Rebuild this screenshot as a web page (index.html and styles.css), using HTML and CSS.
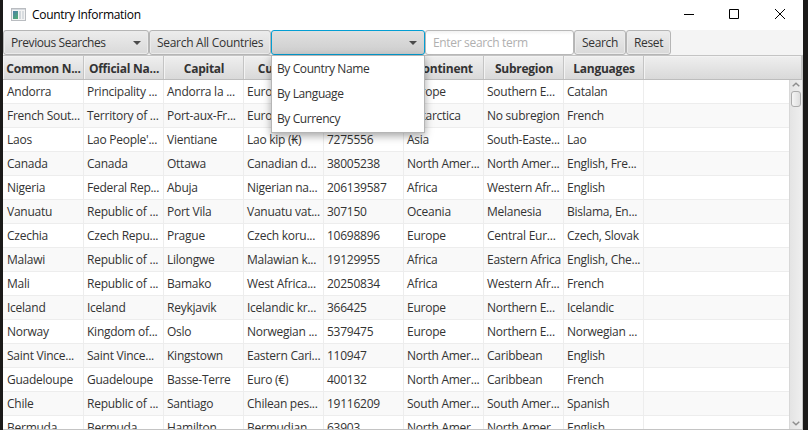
FILE: index.html
```html
<!DOCTYPE html>
<html lang="en">
<head>
<meta charset="utf-8">
<title>Country Information</title>
<link rel="stylesheet" href="styles.css">
</head>
<body>
<div class="window">
  <header class="titlebar">
    <svg class="app-icon" width="15" height="13" viewBox="0 0 15 13">
      <defs><linearGradient id="g" x1="0" y1="0" x2="0.6" y2="1"><stop offset="0" stop-color="#4d7fa8"/><stop offset="1" stop-color="#50a878"/></linearGradient></defs>
      <rect x=".5" y=".5" width="14" height="12" fill="#f4f4f4" stroke="#b9bcc0"/>
      <rect x="1" y="1" width="13" height="1" fill="#d5d9de"/>
      <rect x="2" y="3" width="5" height="8" fill="url(#g)"/>
      <rect x="8" y="3" width="2" height="8" fill="#d3d8dc"/><rect x="11" y="3" width="2" height="8" fill="#d9dde0"/>
    </svg>
    <span class="title">Country Information</span>
    <svg class="controls" width="103" height="12" viewBox="0 0 103 12" fill="none" stroke="#000">
      <path d="M0 6.500h10M45.500 1.500h9v9h-9zM91 1l10 10M101 1l-10 10"/>
    </svg>
  </header>
  <div class="toolbar">
    <div class="button previous"><span>Previous Searches</span><i class="arrow"></i></div>
    <div class="button all"><span>Search All Countries</span></div>
    <div class="button combo"><i class="arrow"></i>
      <div class="menu"><div>By Country Name</div><div>By Language</div><div>By Currency</div></div>
    </div>
    <div class="field">Enter search term</div>
    <div class="button search"><span>Search</span></div>
    <div class="button reset"><span>Reset</span></div>
  </div>
  <main class="table">
    <div class="head"><b>Common N...</b><b>Official Na...</b><b>Capital</b><b>Currency</b><b>Population</b><b>Continent</b><b>Subregion</b><b>Languages</b><b></b></div>
    <div class="body">
      <div class="rows">
        <div class="row"><span>Andorra</span><span>Principality ...</span><span>Andorra la ...</span><span>Euro (€)</span><span>77265</span><span>Europe</span><span>Southern E...</span><span>Catalan</span></div>
        <div class="row"><span>French Sout...</span><span>Territory of ...</span><span>Port-aux-Fr...</span><span>Euro (€)</span><span>400</span><span>Antarctica</span><span>No subregion</span><span>French</span></div>
        <div class="row"><span>Laos</span><span>Lao People'...</span><span>Vientiane</span><span>Lao kip (₭)</span><span>7275556</span><span>Asia</span><span>South-Easte...</span><span>Lao</span></div>
        <div class="row"><span>Canada</span><span>Canada</span><span>Ottawa</span><span>Canadian d...</span><span>38005238</span><span>North Amer...</span><span>North Amer...</span><span>English, Fre...</span></div>
        <div class="row"><span>Nigeria</span><span>Federal Rep...</span><span>Abuja</span><span>Nigerian na...</span><span>206139587</span><span>Africa</span><span>Western Afr...</span><span>English</span></div>
        <div class="row"><span>Vanuatu</span><span>Republic of ...</span><span>Port Vila</span><span>Vanuatu vat...</span><span>307150</span><span>Oceania</span><span>Melanesia</span><span>Bislama, En...</span></div>
        <div class="row"><span>Czechia</span><span>Czech Repu...</span><span>Prague</span><span>Czech koru...</span><span>10698896</span><span>Europe</span><span>Central Eur...</span><span>Czech, Slovak</span></div>
        <div class="row"><span>Malawi</span><span>Republic of ...</span><span>Lilongwe</span><span>Malawian k...</span><span>19129955</span><span>Africa</span><span>Eastern Africa</span><span>English, Che...</span></div>
        <div class="row"><span>Mali</span><span>Republic of ...</span><span>Bamako</span><span>West Africa...</span><span>20250834</span><span>Africa</span><span>Western Afr...</span><span>French</span></div>
        <div class="row"><span>Iceland</span><span>Iceland</span><span>Reykjavik</span><span>Icelandic kr...</span><span>366425</span><span>Europe</span><span>Northern E...</span><span>Icelandic</span></div>
        <div class="row"><span>Norway</span><span>Kingdom of...</span><span>Oslo</span><span>Norwegian ...</span><span>5379475</span><span>Europe</span><span>Northern E...</span><span>Norwegian ...</span></div>
        <div class="row"><span>Saint Vince...</span><span>Saint Vince...</span><span>Kingstown</span><span>Eastern Cari...</span><span>110947</span><span>North Amer...</span><span>Caribbean</span><span>English</span></div>
        <div class="row"><span>Guadeloupe</span><span>Guadeloupe</span><span>Basse-Terre</span><span>Euro (€)</span><span>400132</span><span>North Amer...</span><span>Caribbean</span><span>French</span></div>
        <div class="row"><span>Chile</span><span>Republic of ...</span><span>Santiago</span><span>Chilean pes...</span><span>19116209</span><span>South Amer...</span><span>South Amer...</span><span>Spanish</span></div>
        <div class="row"><span>Bermuda</span><span>Bermuda</span><span>Hamilton</span><span>Bermudian ...</span><span>63903</span><span>North Amer...</span><span>North Amer...</span><span>English</span></div>
      </div>
      <div class="scrollbar">
        <svg width="8" height="5" viewBox="0 0 8 5" fill="none" stroke="#8e8e8e" stroke-width="1.500"><path d="M.7 4.200L4 1.200l3.300 3"/></svg>
        <div class="thumb"></div>
        <svg class="down" width="8" height="5" viewBox="0 0 8 5" fill="none" stroke="#8e8e8e" stroke-width="1.500"><path d="M.7.8L4 3.800l3.300-3"/></svg>
      </div>
    </div>
  </main>
</div>
</body>
</html>
```
FILE: styles.css
```css
* { box-sizing: border-box; }
body {
  margin: 0;
  height: 430px;
  overflow: hidden;
  background: #1b1a19;
  color: #333;
  font: 12px/16px "Open Sans", "Noto Sans", sans-serif;
  letter-spacing: -0.25px;
  white-space: nowrap;
}
.window {
  width: 800px;
  height: 430px;
  margin-left: 3px;
  background: #f4f4f4;
  display: flex;
  flex-direction: column;
}
.titlebar {
  height: 30px;
  flex: none;
  display: flex;
  align-items: center;
  padding: 0 16px 2px 8px;
  background: #fff;
  color: #000;
}
.title { margin: 2px 0 0 6px; letter-spacing: -0.29px; }
.controls { margin-left: auto; }
.toolbar {
  height: 25px;
  flex: none;
  display: flex;
  align-items: flex-start;
  letter-spacing: -0.33px;
}
.button {
  height: 25px;
  border: 1px solid #b5b5b5;
  border-radius: 3px;
  background: linear-gradient(#ececec, #d9d9d9);
  box-shadow: inset 0 0 0 1px #ebebeb;
  padding: 4px 7px 0;
  display: flex;
  justify-content: space-between;
}
.previous { width: 146px; letter-spacing: -0.42px; }
.all { width: 122px; letter-spacing: -0.29px; }
.combo {
  width: 154px;
  position: relative;
  justify-content: flex-end;
  border: 1px solid #039ed3;
  background: linear-gradient(#e0e0e0, #cdcdcd);
  box-shadow: none;
}
.search { width: 52px; }
.reset { width: 45px; }
.arrow {
  margin-top: 6px;
  width: 8px;
  height: 4px;
  background: #4b4b4b;
  clip-path: polygon(0 0, 100% 0, 50% 100%);
}
.field {
  width: 149px;
  height: 25px;
  border: 1px solid #b8b8b8;
  border-radius: 3px;
  background: linear-gradient(#f2f2f2, #fff 4px);
  color: #b0b0b0;
  padding: 4px 7px 0;
}
.menu {
  position: absolute;
  z-index: 2;
  left: -1px;
  top: 24px;
  width: 154px;
  height: 78px;
  padding: 0 5px;
  border: 1px solid #b5b5b5;
  background: #fff;
  box-shadow: 0 3px 8px rgba(0, 0, 0, .35);
  letter-spacing: -0.4px;
}
.menu div { height: 25px; line-height: 25px; }
.table {
  height: 375px;
  border: 1px solid #c4c4c4;
  border-width: 1px 1px 1px 0;
  display: flex;
  flex-direction: column;
  background: #fff;
}
.head {
  height: 24px;
  flex: none;
  display: grid;
  grid-template-columns: 81px repeat(7, 80px) 1fr;
  background: linear-gradient(#efefef, #d9d9d9);
  border-bottom: 1px solid #bdbdbd;
}
.head b {
  text-align: center;
  line-height: 26px;
  padding-left: 1px;
  border-right: 1px solid #c4c4c4;
  box-shadow: inset 1px 1px #f3f3f3;
  overflow: hidden;
}
.body {
  flex: 1;
  min-height: 0;
  display: flex;
  overflow: hidden;
}
.rows { flex: 1; overflow: hidden; }
.row {
  height: 24px;
  display: grid;
  grid-template-columns: 81px repeat(7, 80px);
  border-bottom: 1px solid #ededed;
}
.row:nth-child(even) { background: #f9f9f9; }
.row span {
  line-height: 24px;
  padding-left: 3px;
  border-right: 1px solid #ededed;
  overflow: hidden;
}
.row span:first-child { padding-left: 4px; }
.scrollbar {
  width: 13px;
  border-left: 1px solid #d8d8d8;
  background: linear-gradient(90deg, #e4e4e4, #efefef);
  display: flex;
  flex-direction: column;
  align-items: center;
  padding: 2px 0 3px;
}
.thumb {
  width: 10px;
  height: 16px;
  margin-top: 4px;
  border: 1px solid #ababab;
  border-radius: 3px;
  background: linear-gradient(90deg, #f5f5f5, #dedede);
}
.down { margin-top: auto; }
```
